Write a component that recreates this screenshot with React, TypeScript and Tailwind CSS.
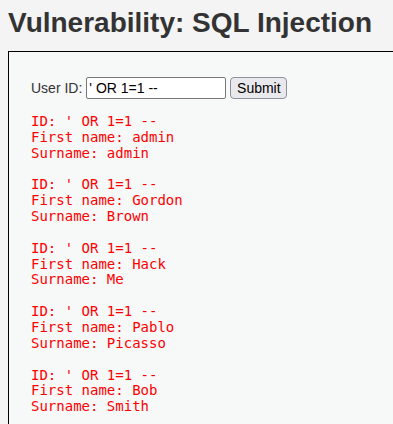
export default function App() {
  const rows = [
    ['admin', 'admin'],
    ['Gordon', 'Brown'],
    ['Hack', 'Me'],
    ['Pablo', 'Picasso'],
    ['Bob', 'Smith'],
  ]

  return (
    <div className="h-[424px] w-[393px] overflow-hidden bg-[#f4f4f4] font-['Liberation_Sans',Arial,sans-serif]">
      <h1 className="pl-2 pt-[7px] text-[28px] font-bold leading-[32px] text-[#333333]">
        Vulnerability: SQL Injection
      </h1>

      {/* Vulnerable code area */}
      <div className="ml-2 mt-[12px] w-[420px] border border-black bg-[#f7f8f8] pb-10 pl-[22px] pt-[25px]">
        <form className="flex items-center text-[14px] text-[#333333]" onSubmit={(e) => e.preventDefault()}>
          <label htmlFor="uid">User ID:</label>
          <input
            id="uid"
            type="text"
            defaultValue="' OR 1=1 --"
            className="ml-[4px] h-[22px] w-[140px] rounded-[2px] border border-[#767676] bg-white px-[2px] text-[14px] text-black"
          />
          <button
            type="submit"
            className="ml-[4px] h-[22px] w-[57px] rounded-[4px] border border-[#8f8f9d] bg-[#e9e9ed] text-[14px] text-black"
          >
            Submit
          </button>
        </form>

        <div className="mt-[15px] flex flex-col gap-[15.85px]">
          {rows.map(([first, last], i) => (
            <pre key={i} className="font-['DejaVu_Sans_Mono',monospace] text-[14px] leading-[15.85px] text-[#ff0000]">
              {`ID: ' OR 1=1 --\nFirst name: ${first}\nSurname: ${last}`}
            </pre>
          ))}
        </div>
      </div>
    </div>
  )
}
